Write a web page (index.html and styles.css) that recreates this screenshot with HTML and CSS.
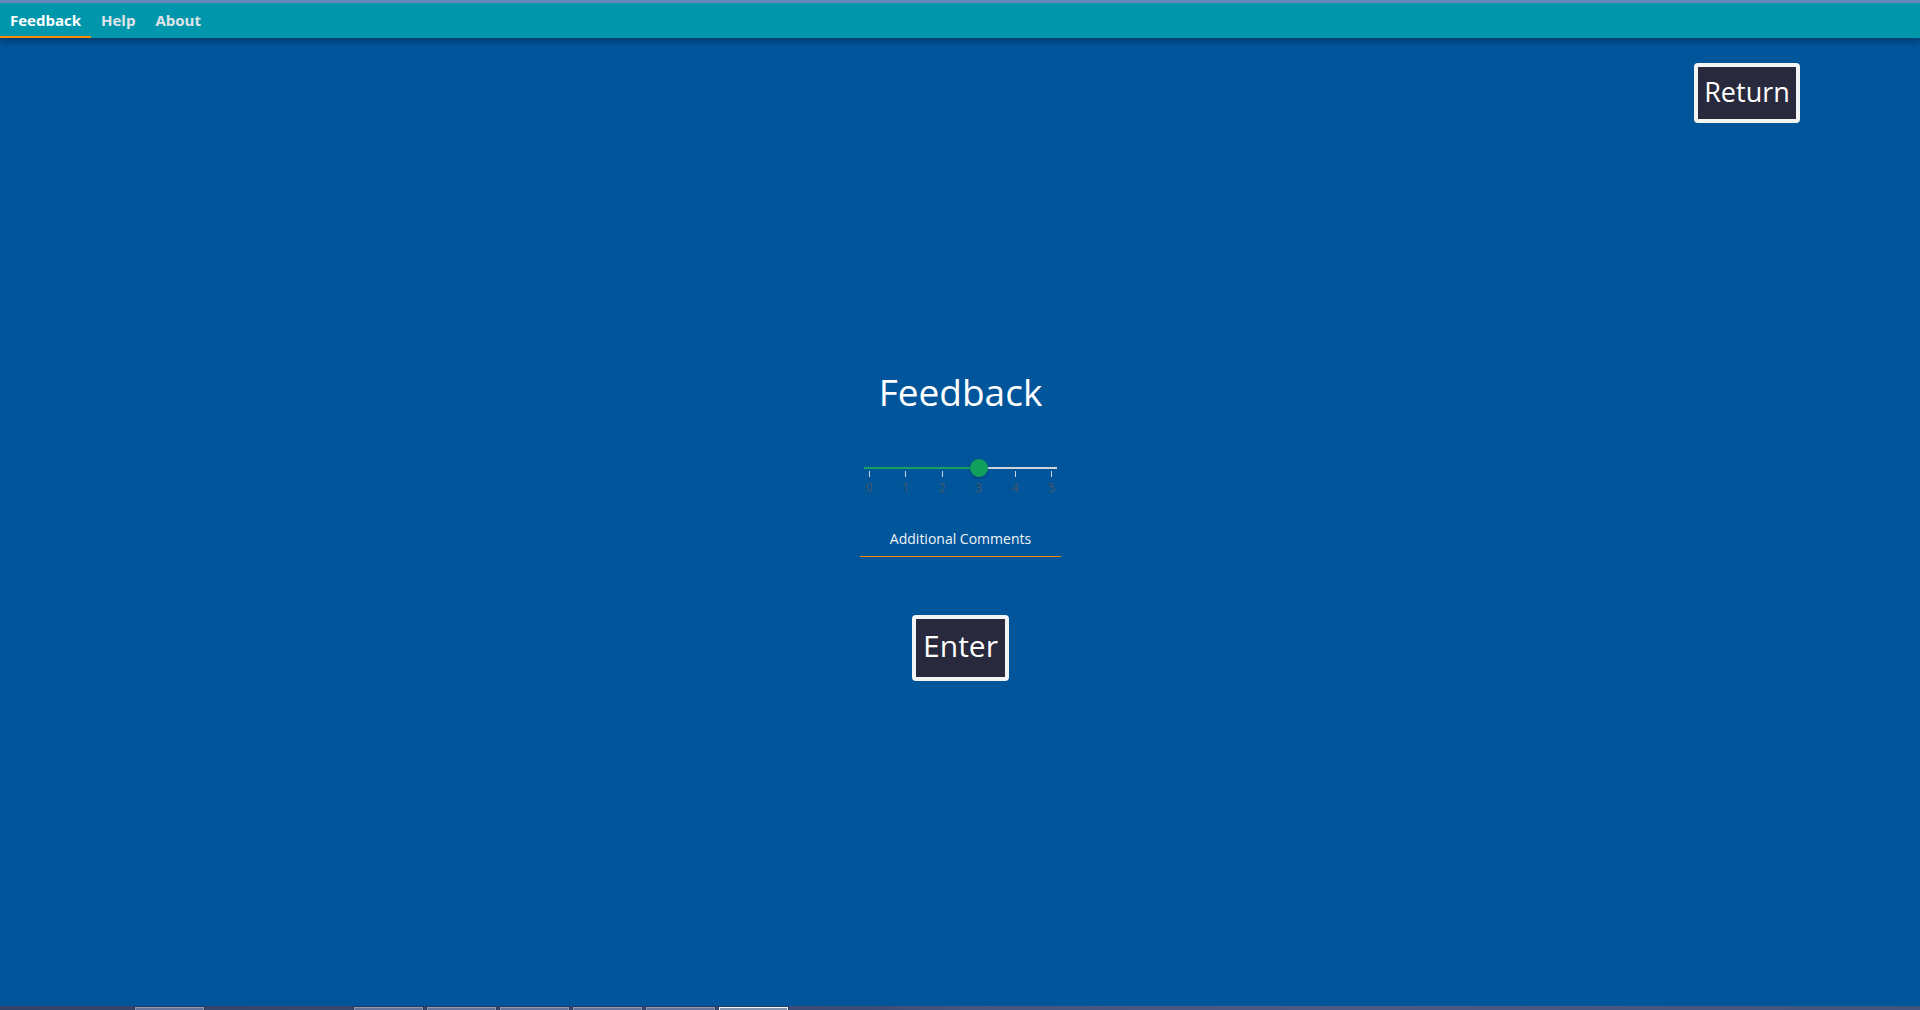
FILE: index.html
```html
<!DOCTYPE html>
<html lang="en">
<head>
<meta charset="utf-8">
<title>Feedback</title>
<link rel="stylesheet" href="styles.css">
</head>
<body>
<nav class="menu">
  <a class="menu-link active" href="#feedback">Feedback</a>
  <a class="menu-link" href="#help">Help</a>
  <a class="menu-link" href="#about">About</a>
</nav>
<main class="stage">
  <button class="btn btn-return" type="button">Return</button>
  <form class="form">
    <h1 class="title">Feedback</h1>
    <div class="rating">
      <input class="slider" type="range" min="0" max="5" value="3" aria-label="Rating">
      <div class="ticks">
        <span class="tick">0</span>
        <span class="tick">1</span>
        <span class="tick">2</span>
        <span class="tick">3</span>
        <span class="tick">4</span>
        <span class="tick">5</span>
      </div>
    </div>
    <input class="comments" type="text" placeholder="Additional Comments" aria-label="Additional Comments">
    <button class="btn btn-enter" type="button">Enter</button>
  </form>
</main>
<footer class="taskbar">
  <span class="task task-first"></span>
  <span class="task"></span>
  <span class="task"></span>
  <span class="task"></span>
  <span class="task"></span>
  <span class="task"></span>
  <span class="task current"></span>
</footer>
</body>
</html>
```
FILE: styles.css
```css
* {
  box-sizing: border-box;
}

body {
  margin: 0;
  min-height: 100vh;
  display: flex;
  flex-direction: column;
  background: #00559b;
  color: #fff;
  font-family: "Segoe UI", "Open Sans", "Noto Sans", sans-serif;
}

.menu {
  display: flex;
  height: 38px;
  border-top: 3px solid #6888bb;
  background: #0097ad;
  box-shadow: 0 2px 8px rgba(0, 0, 0, 0.4);
}

.menu-link {
  padding: 0 10px;
  border-bottom: 2px solid transparent;
  color: #e0e4e8;
  font-size: 15px;
  font-weight: 700;
  line-height: 34px;
  text-decoration: none;
}

.menu-link.active {
  border-bottom-color: #ff8c00;
  color: #fff;
}

.stage {
  flex: 1;
  display: grid;
  grid-template-columns: 1fr;
  padding: 25px 120px 24px 121px;
}

.btn {
  padding: 0 6px;
  border: 4px solid #f4f4f4;
  border-radius: 4px;
  background: #29293d;
  color: #fff;
  font-family: inherit;
}

.btn-return {
  grid-area: 1 / 1;
  place-self: start end;
  z-index: 1;
  width: 106px;
  height: 60px;
  padding-bottom: 4px;
  font-size: 27px;
}

.btn-enter {
  width: 97px;
  height: 66px;
  margin-top: 58px;
  padding-bottom: 4px;
  font-size: 30px;
}

.form {
  grid-area: 1 / 1;
  place-self: center;
  display: flex;
  flex-direction: column;
  align-items: center;
}

.title {
  margin: 0 0 40px;
  font-size: 37px;
  font-weight: 400;
  line-height: 54px;
}

.rating {
  display: flex;
  flex-direction: column;
  align-items: center;
}

.slider {
  appearance: none;
  z-index: 1;
  position: relative;
  width: 201px;
  height: 18px;
  margin: 0;
  background: transparent;
}

.slider::-webkit-slider-runnable-track {
  height: 18px;
  background:
    linear-gradient(#12a05c, #12a05c) 4px 8px / 115px 2px no-repeat,
    linear-gradient(#d0d4d8, #d0d4d8) 115px 8px / 82px 2px no-repeat;
}

.slider::-webkit-slider-thumb {
  appearance: none;
  width: 18px;
  height: 18px;
  border-radius: 50%;
  background: #12a05c;
  box-shadow: 0 1px 3px rgba(0, 0, 0, 0.25);
}

.ticks {
  display: grid;
  grid-template-columns: repeat(6, 1fr);
  width: 219px;
  margin-top: -6px;
  color: #4b5560;
  font-size: 12px;
  line-height: 22px;
}

.tick {
  display: flex;
  flex-direction: column;
  align-items: center;
}

.tick::before {
  content: "";
  width: 1px;
  height: 6px;
  background: #d0d4d8;
}

.comments {
  width: 201px;
  height: 34px;
  margin-top: 24px;
  padding: 0 0 2px;
  border: 0;
  border-bottom: 1px solid #ff8c00;
  background: transparent;
  color: #fff;
  font-family: inherit;
  font-size: 14px;
  text-align: center;
}

.comments::placeholder {
  color: #f0f4f8;
}

.taskbar {
  display: flex;
  gap: 4px;
  height: 4px;
  overflow: hidden;
  background: linear-gradient(90deg, #344468, #3c4c78 45%, #46567f 50%, #4c5984 70%, #43557d);
}

.task {
  width: 69px;
  height: 12px;
  border: 1px solid #8d9ab2;
  outline: 1px solid #29395b;
  margin-top: 1px;
  background: #66749a;
}

.task-first {
  margin-left: 135px;
  margin-right: 146px;
}

.task.current {
  border-color: #f0f4fa;
  background: #8593af;
}
```
